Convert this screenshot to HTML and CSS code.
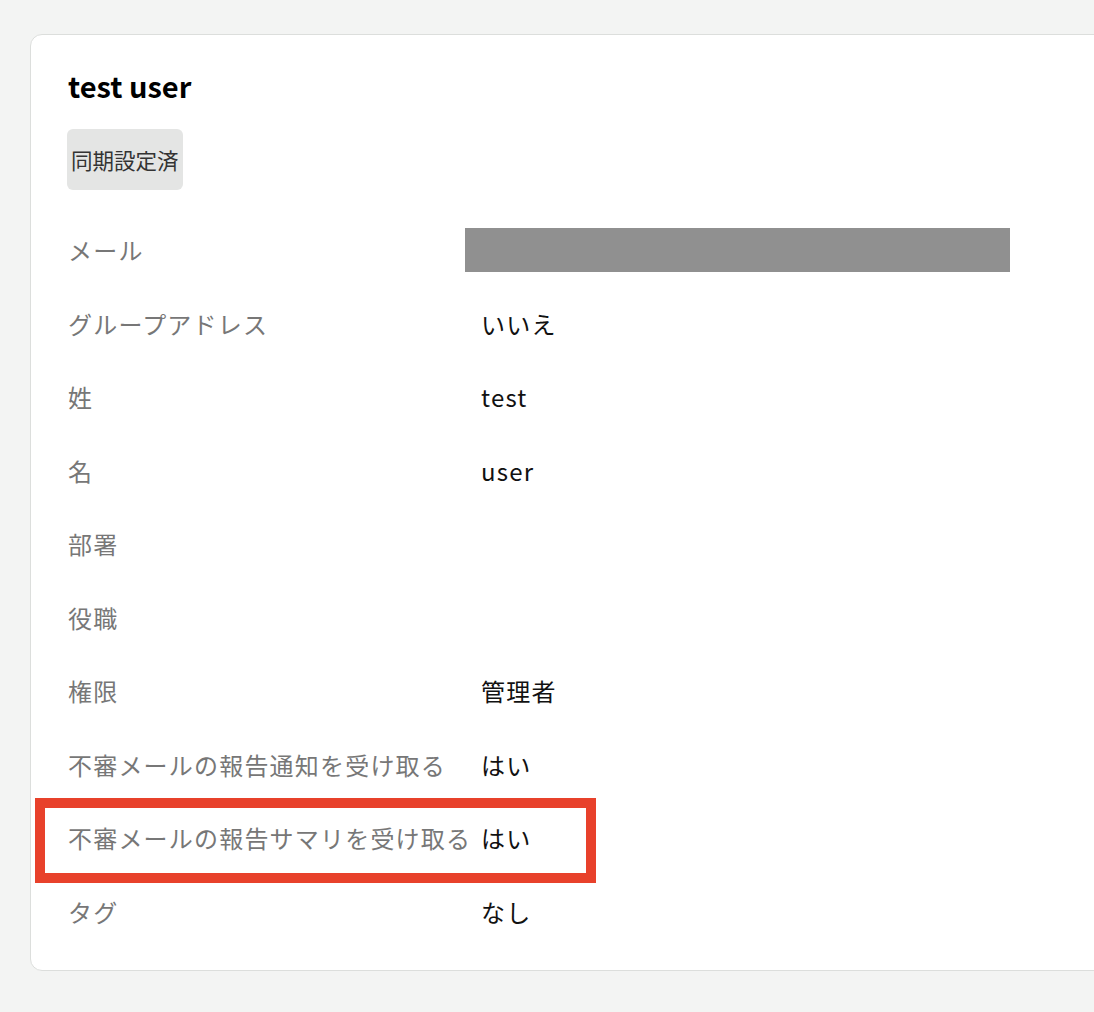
FILE: index.html
```html
<!DOCTYPE html>
<html lang="ja">

<head>
    <meta charset="UTF-8">
    <meta name="viewport" content="width=device-width, initial-scale=1.0">
    <title>ユーザー詳細</title>
    <link rel="stylesheet" href="styles.css">
</head>

<body>
    <div class="user-card">
        <h1 class="user-name">test user</h1>
        <span class="sync-badge">同期設定済</span>
        <dl class="info-list">
            <div class="info-row">
                <dt>メール</dt>
                <dd><div class="redacted"></div></dd>
            </div>
            <div class="info-row">
                <dt>グループアドレス</dt>
                <dd>いいえ</dd>
            </div>
            <div class="info-row">
                <dt>姓</dt>
                <dd>test</dd>
            </div>
            <div class="info-row">
                <dt>名</dt>
                <dd>user</dd>
            </div>
            <div class="info-row">
                <dt>部署</dt>
                <dd></dd>
            </div>
            <div class="info-row">
                <dt>役職</dt>
                <dd></dd>
            </div>
            <div class="info-row">
                <dt>権限</dt>
                <dd>管理者</dd>
            </div>
            <div class="info-row">
                <dt>不審メールの報告通知を受け取る</dt>
                <dd>はい</dd>
            </div>
            <!-- 注目箇所 -->
            <div class="info-row marked">
                <dt>不審メールの報告サマリを受け取る</dt>
                <dd>はい</dd>
            </div>
            <div class="info-row">
                <dt>タグ</dt>
                <dd>なし</dd>
            </div>
        </dl>
    </div>
</body>

</html>
```

FILE: styles.css
```css
html,
body {
    overflow-x: hidden;
}

body {
    margin: 0;
    padding: 34px 0 40px 30px;
    background: #f3f4f3;
    font-family: 'Noto Sans CJK JP', 'Noto Sans', sans-serif;
}

.user-card {
    margin-right: -40px;
    padding: 30px 36px 22px 37px;
    background: #fff;
    border: 1px solid #dcdedc;
    border-radius: 12px;
}

.user-name {
    margin: 0 0 24px 0;
    font-size: 29px;
    line-height: 40px;
    font-weight: bold;
    color: #000;
}

.sync-badge {
    display: inline-flex;
    align-items: center;
    height: 61px;
    margin-left: -1px;
    padding: 0 4px;
    border-radius: 6px;
    background: #e4e5e4;
    color: #333;
    font-size: 21.5px;
}

.info-list {
    margin: 23px 0 0 0;
    padding: 0;
}

.info-row {
    display: grid;
    grid-template-columns: 413px 1fr;
    align-items: center;
    height: 73.5px;
    font-size: 24px;
    letter-spacing: 0.05em;
}

.info-row dt {
    color: #777;
    white-space: nowrap;
}

.info-row dd {
    margin: 0;
    color: #111;
}

.redacted {
    width: 545px;
    height: 44px;
    margin-left: -16px;
    background: #909090;
}

.marked {
    position: relative;
}

.marked::after {
    content: '';
    position: absolute;
    left: -33px;
    top: -3px;
    width: 561px;
    height: 85px;
    box-sizing: border-box;
    border: 10px solid #e8412b;
}
```
